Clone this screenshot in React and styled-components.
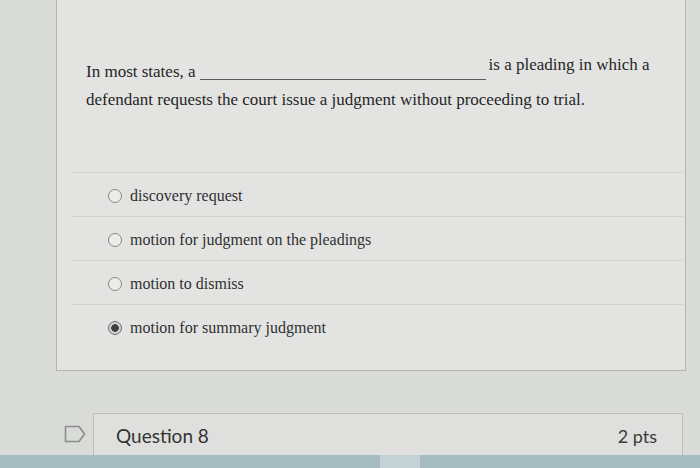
import styled, { createGlobalStyle } from 'styled-components';

// === Global ===
const GlobalStyle = createGlobalStyle`
  html, body {
    margin: 0;
    padding: 0;
    background: #d9dbd9;
  }
  body {
    font-family: "Liberation Serif", "Times New Roman", serif;
    overflow: hidden;
  }
`;

// === Styled Components ===
const Page = styled.div`
  width: 700px;
  height: 468px;
  display: flex;
  flex-direction: column;
`;

const QuestionCard = styled.section`
  margin-left: 56px;
  width: 630px;
  background: #e3e4e2;
  border: 1px solid #b4b6b4;
  border-top: none;
  padding: 51px 0 22px;
  box-sizing: border-box;
`;

const QuestionText = styled.p`
  margin: 0;
  padding: 0 16px 0 29px;
  font-size: 17px;
  line-height: 28px;
  color: #262626;
`;

const Blank = styled.span`
  display: inline-block;
  width: 286px;
  height: 16px;
  margin: 0 3px 0 4px;
  border-bottom: 1px solid #5a5a5a;
  vertical-align: -3px;
`;

const Raised = styled.span`
  vertical-align: 7px;
`;

const AnswerList = styled.ul`
  list-style: none;
  margin: 58px 2px 0 14px;
  padding: 0;
`;

const Answer = styled.li`
  display: flex;
  align-items: center;
  gap: 8px;
  height: 44px;
  padding: 3px 0 0 37px;
  border-top: 1px solid #cfd1cf;
  box-sizing: border-box;
  font-size: 16px;
  color: #303030;
`;

const Radio = styled.span`
  width: 14px;
  height: 14px;
  border-radius: 50%;
  border: 1.5px solid ${({ $checked }) => ($checked ? '#6e6e6e' : '#858785')};
  background: ${({ $checked }) =>
    $checked ? 'radial-gradient(circle, #3d3d3d 0 3.5px, #d0d1cf 4px)' : '#ecedeb'};
  box-sizing: border-box;
  flex-shrink: 0;
`;

const NextRow = styled.div`
  display: flex;
  align-items: center;
  margin-top: 42px;
  padding-left: 64px;
`;

const FlagIcon = styled.svg`
  width: 22px;
  height: 18px;
  margin-right: 7px;
`;

const QuestionHeader = styled.header`
  flex: 0 0 590px;
  height: 42px;
  display: flex;
  align-items: center;
  justify-content: space-between;
  padding: 2px 25px 0 22px;
  box-sizing: border-box;
  background: #dfe0de;
  border: 1px solid #bcbebc;
  border-bottom: none;
  font-family: Lato, "Open Sans", sans-serif;
  font-size: 19px;
  color: #333;
`;

const Points = styled.span`
  font-size: 18px;
  color: #3a3a3a;
`;

const BottomBar = styled.div`
  flex: 1;
  background: linear-gradient(
    to right,
    #a6bec2 0,
    #a6bec2 380px,
    #c4d2d4 380px,
    #c4d2d4 420px,
    #a6bec2 420px
  );
`;

const answers = [
  { id: 'a', label: 'discovery request' },
  { id: 'b', label: 'motion for judgment on the pleadings' },
  { id: 'c', label: 'motion to dismiss' },
  { id: 'd', label: 'motion for summary judgment', checked: true },
];

export default function App() {
  return (
    <Page>
      <GlobalStyle />
      <QuestionCard>
        <QuestionText>
          In most states, a<Blank />
          <Raised>is a pleading in which a</Raised> defendant requests the court issue a judgment
          without proceeding to trial.
        </QuestionText>
        <AnswerList>
          {answers.map((answer) => (
            <Answer key={answer.id}>
              <Radio $checked={answer.checked} />
              {answer.label}
            </Answer>
          ))}
        </AnswerList>
      </QuestionCard>

      <NextRow>
        <FlagIcon viewBox="0 0 22 18" aria-hidden="true">
          <path
            d="M1.5 1.5 H15 L20.5 9 L15 16.5 H1.5 Z"
            fill="none"
            stroke="#8a8c8a"
            strokeWidth="1.6"
            strokeLinejoin="round"
          />
        </FlagIcon>
        <QuestionHeader>
          <span>Question 8</span>
          <Points>2 pts</Points>
        </QuestionHeader>
      </NextRow>
      <BottomBar />
    </Page>
  );
}
